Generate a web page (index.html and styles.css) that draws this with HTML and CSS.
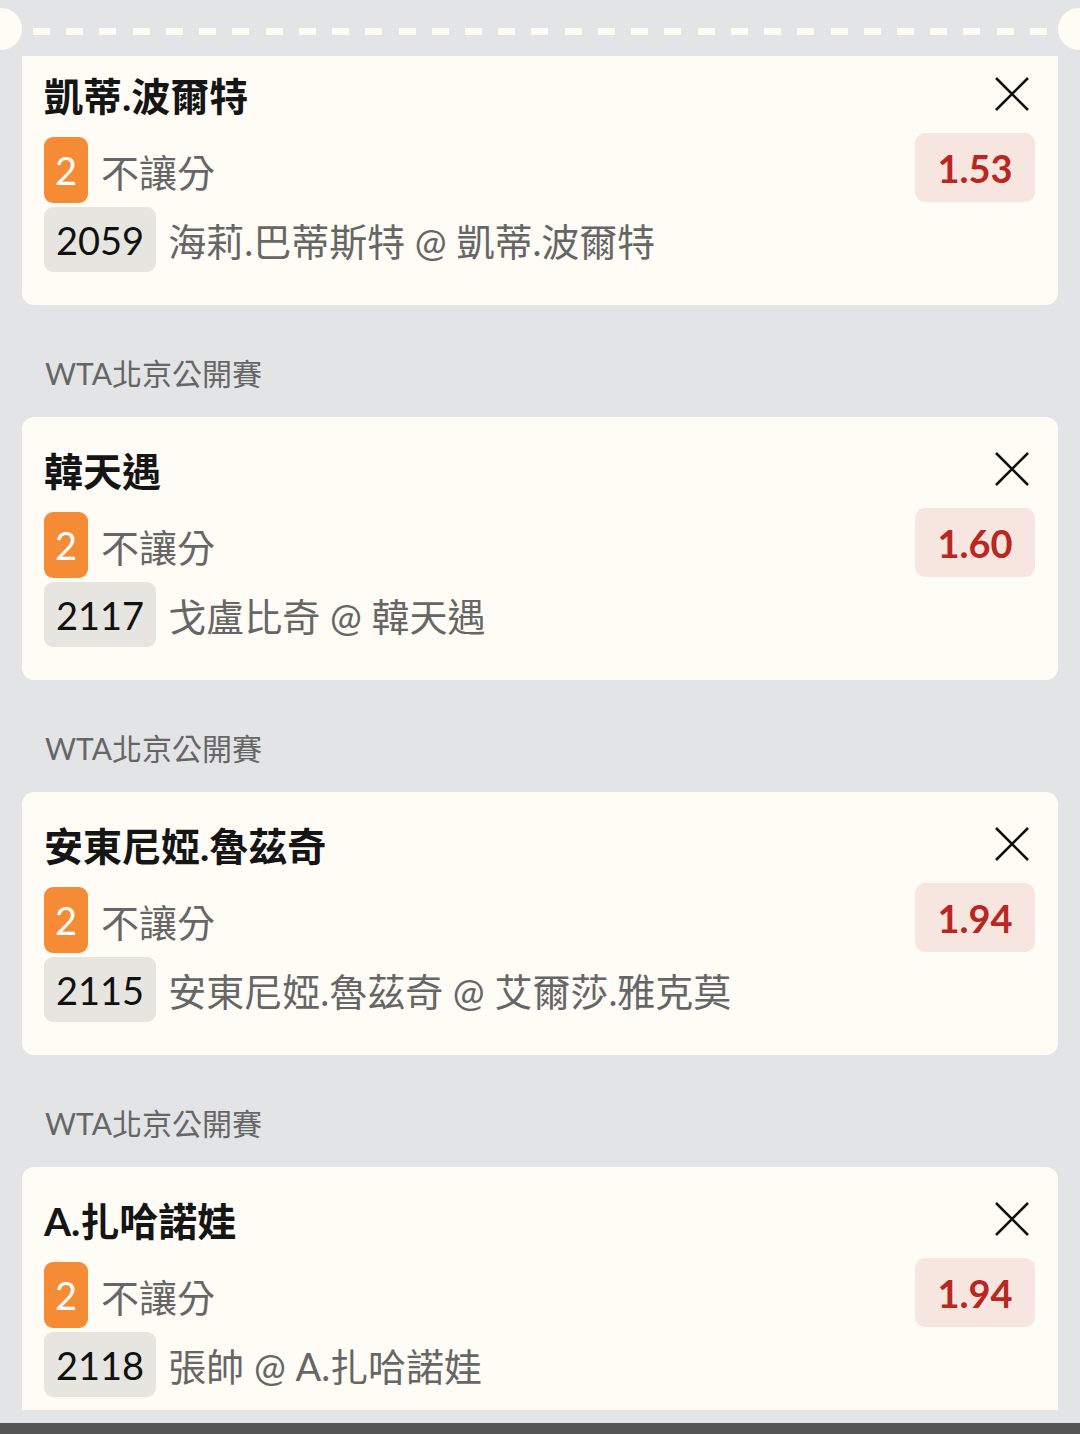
FILE: index.html
```html
<!DOCTYPE html>
<html lang="zh-Hant">
<head>
    <meta charset="UTF-8">
    <meta name="viewport" content="width=device-width, initial-scale=1.0">
    <title>投注單</title>
    <link rel="stylesheet" href="styles.css">
</head>
<body>
    <div class="scroll">
        <div class="ticket-edge">
            <span class="notch notch-left"></span>
            <span class="dashes"></span>
            <span class="notch notch-right"></span>
        </div>

        <div class="card card-first">
            <div class="card-head">
                <span class="pick">凱蒂.波爾特</span>
                <svg class="close" viewBox="0 0 34 34"><path d="M1 1L33 33M33 1L1 33"/></svg>
            </div>
            <div class="row row-market">
                <span class="tag">2</span>
                <span class="market">不讓分</span>
                <span class="odds">1.53</span>
            </div>
            <div class="row">
                <span class="code">2059</span>
                <span class="match">海莉.巴蒂斯特 @ 凱蒂.波爾特</span>
            </div>
        </div>

        <div class="league">WTA北京公開賽</div>
        <div class="card">
            <div class="card-head">
                <span class="pick">韓天遇</span>
                <svg class="close" viewBox="0 0 34 34"><path d="M1 1L33 33M33 1L1 33"/></svg>
            </div>
            <div class="row row-market">
                <span class="tag">2</span>
                <span class="market">不讓分</span>
                <span class="odds">1.60</span>
            </div>
            <div class="row">
                <span class="code">2117</span>
                <span class="match">戈盧比奇 @ 韓天遇</span>
            </div>
        </div>

        <div class="league">WTA北京公開賽</div>
        <div class="card">
            <div class="card-head">
                <span class="pick">安東尼婭.魯茲奇</span>
                <svg class="close" viewBox="0 0 34 34"><path d="M1 1L33 33M33 1L1 33"/></svg>
            </div>
            <div class="row row-market">
                <span class="tag">2</span>
                <span class="market">不讓分</span>
                <span class="odds">1.94</span>
            </div>
            <div class="row">
                <span class="code">2115</span>
                <span class="match">安東尼婭.魯茲奇 @ 艾爾莎.雅克莫</span>
            </div>
        </div>

        <div class="league">WTA北京公開賽</div>
        <div class="card">
            <div class="card-head">
                <span class="pick">A.扎哈諾娃</span>
                <svg class="close" viewBox="0 0 34 34"><path d="M1 1L33 33M33 1L1 33"/></svg>
            </div>
            <div class="row row-market">
                <span class="tag">2</span>
                <span class="market">不讓分</span>
                <span class="odds">1.94</span>
            </div>
            <div class="row">
                <span class="code">2118</span>
                <span class="match">張帥 @ A.扎哈諾娃</span>
            </div>
        </div>
    </div>
    <div class="nav-bar"></div>
</body>
</html>
```

FILE: styles.css
```css
body {
    margin: 0;
    background-color: #e3e4e6;
    font-family: Lato, "Noto Sans CJK TC", sans-serif;
    overflow: hidden;
}
.scroll {
    height: 1410px;
    overflow: hidden;
}
.ticket-edge {
    height: 56px;
    display: flex;
    align-items: center;
    overflow: hidden;
}
.notch {
    flex: none;
    width: 42px;
    height: 42px;
    border-radius: 50%;
    background-color: #fefcf5;
    margin-top: 2px;
}
.notch-left {
    margin-left: -20px;
}
.notch-right {
    margin-right: -20px;
}
.dashes {
    flex: 1;
    height: 7px;
    margin: 7px 11px 0;
    background: repeating-linear-gradient(90deg, #fefcf5 0 17px, transparent 17px 33.23px);
}
.card {
    background-color: #fefcf5;
    margin: 0 22px;
    border-radius: 12px;
    padding: 24px 23px 33px 22px;
}
.card-first {
    border-radius: 0 0 12px 12px;
    padding-top: 10px;
}
.card-head {
    height: 56px;
    margin-bottom: 15px;
    display: flex;
    align-items: center;
    justify-content: space-between;
}
.pick {
    font-size: 39px;
    font-weight: 700;
    color: #151515;
}
.close {
    width: 34px;
    height: 34px;
    margin-right: 6px;
    fill: none;
    stroke: #111;
    stroke-width: 2.6;
}
.row {
    display: flex;
    align-items: center;
    height: 65px;
}
.row-market {
    height: 66px;
    margin-bottom: 4px;
}
.tag {
    width: 44px;
    height: 66px;
    border-radius: 9px;
    background-color: #f68b36;
    color: #fff;
    font-size: 38px;
    display: flex;
    align-items: center;
    justify-content: center;
}
.market {
    margin-left: 13px;
    font-size: 38px;
    color: #666;
    flex: 1;
}
.odds {
    align-self: flex-start;
    margin-top: -4px;
    width: 120px;
    height: 69px;
    border-radius: 10px;
    background-color: #f7e5df;
    color: #b9271f;
    font-size: 38px;
    font-weight: 700;
    display: flex;
    align-items: center;
    justify-content: center;
}
.code {
    height: 65px;
    padding: 0 12px;
    border-radius: 9px;
    background-color: #e7e5df;
    color: #111;
    font-size: 38px;
    display: flex;
    align-items: center;
}
.match {
    margin-left: 12px;
    font-size: 38px;
    color: #666;
}
.league {
    padding: 48px 0 24px 45px;
    line-height: 40px;
    font-size: 30px;
    color: #666;
}
.nav-bar {
    margin-top: 13px;
    height: 11px;
    background-color: #555;
}
```
